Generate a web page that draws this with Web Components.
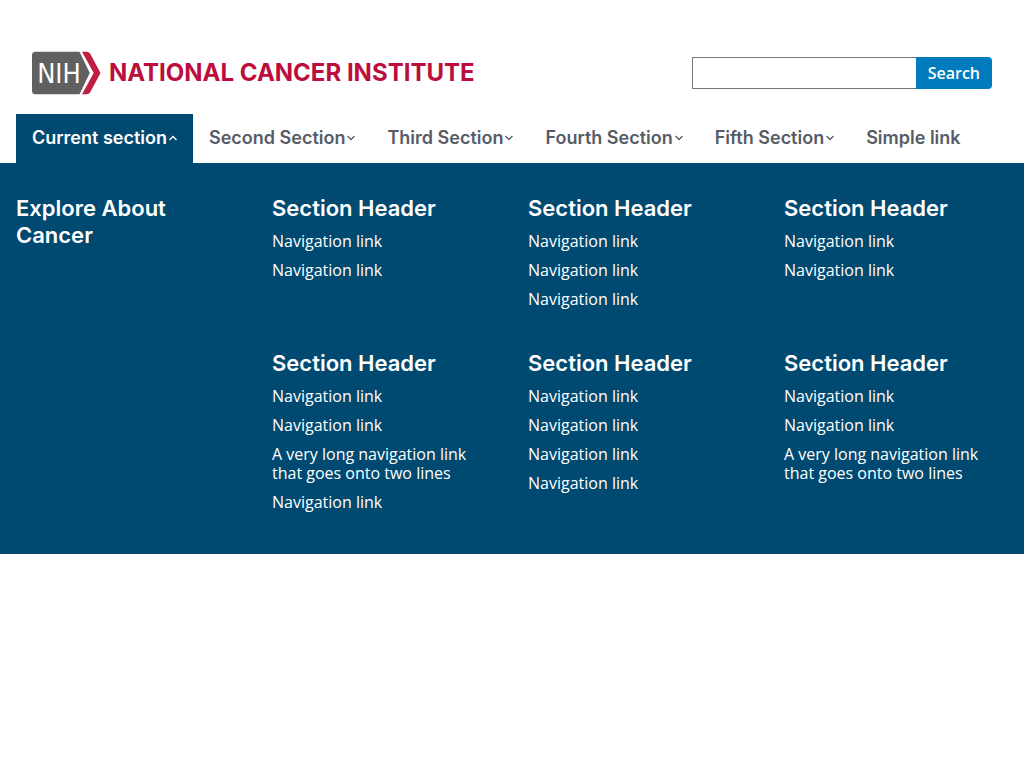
<!DOCTYPE html>
<html lang="en">
<head>
<meta charset="utf-8">
<meta name="viewport" content="width=device-width, initial-scale=1">
<title>National Cancer Institute</title>
<style>
  body { margin: 0; background: #fff; font-family: "Open Sans", sans-serif; font-size: 16px; color: #1b1b1b; }
</style>
</head>
<body>
<nci-header>
  <nci-logo slot="logo"></nci-logo>
  <nci-search slot="search"></nci-search>
</nci-header>
<nci-nav>
  <nci-nav-button open>Current section</nci-nav-button>
  <nci-nav-button>Second Section</nci-nav-button>
  <nci-nav-button>Third Section</nci-nav-button>
  <nci-nav-button>Fourth Section</nci-nav-button>
  <nci-nav-button>Fifth Section</nci-nav-button>
  <nci-nav-link>Simple link</nci-nav-link>
</nci-nav>
<nci-megamenu>
  <nci-heading slot="title" linked>Explore About Cancer</nci-heading>
  <nci-menu-group>
    <nci-heading slot="heading">Section Header</nci-heading>
    <nci-menu-link>Navigation link</nci-menu-link>
    <nci-menu-link>Navigation link</nci-menu-link>
  </nci-menu-group>
  <nci-menu-group>
    <nci-heading slot="heading">Section Header</nci-heading>
    <nci-menu-link>Navigation link</nci-menu-link>
    <nci-menu-link>Navigation link</nci-menu-link>
    <nci-menu-link>Navigation link</nci-menu-link>
  </nci-menu-group>
  <nci-menu-group>
    <nci-heading slot="heading">Section Header</nci-heading>
    <nci-menu-link>Navigation link</nci-menu-link>
    <nci-menu-link>Navigation link</nci-menu-link>
  </nci-menu-group>
  <nci-menu-group>
    <nci-heading slot="heading">Section Header</nci-heading>
    <nci-menu-link>Navigation link</nci-menu-link>
    <nci-menu-link>Navigation link</nci-menu-link>
    <nci-menu-link>A very long navigation link that goes onto two lines</nci-menu-link>
    <nci-menu-link>Navigation link</nci-menu-link>
  </nci-menu-group>
  <nci-menu-group>
    <nci-heading slot="heading">Section Header</nci-heading>
    <nci-menu-link>Navigation link</nci-menu-link>
    <nci-menu-link>Navigation link</nci-menu-link>
    <nci-menu-link>Navigation link</nci-menu-link>
    <nci-menu-link>Navigation link</nci-menu-link>
  </nci-menu-group>
  <nci-menu-group>
    <nci-heading slot="heading">Section Header</nci-heading>
    <nci-menu-link>Navigation link</nci-menu-link>
    <nci-menu-link>Navigation link</nci-menu-link>
    <nci-menu-link>A very long navigation link that goes onto two lines</nci-menu-link>
  </nci-menu-group>
</nci-megamenu>
<script>
const define = (name, html, setup) => customElements.define(name, class extends HTMLElement {
  constructor() {
    super();
    this.attachShadow({ mode: 'open' }).innerHTML = html;
  }
  connectedCallback() { if (setup) setup(this, this.shadowRoot); }
});

define('nci-header', `
  <style>
    :host { display: block; }
    header { display: flex; align-items: center; justify-content: space-between; gap: 32px; padding: 48px 32px 16px; min-height: 50px; }
  </style>
  <header><slot name="logo"></slot><slot name="search"></slot></header>`);

define('nci-logo', `
  <style>
    :host { display: block; }
    a { display: flex; align-items: center; gap: 8px; text-decoration: none; color: #bb0e3d; font: 700 24px/28px Inter, sans-serif; white-space: nowrap; }
    svg { display: block; flex: none; }
  </style>
  <a href="#">
    <svg width="69" height="44" viewBox="0 0 69 44" aria-hidden="true">
      <path fill="#606060" d="M3.5.7H47.5L57.8 22 47.5 43.3H3.5A3.5 3.5 0 0 1 0 39.8V4.2A3.5 3.5 0 0 1 3.5.7Z"/>
      <path fill="#bf1f40" d="M50 .7H54.5Q57 .7 58.2 2.8L68.5 22 58.2 41.2Q57 43.3 54.5 43.3H50L61.7 22Z"/>
      <text x="27" y="32" text-anchor="middle" fill="#fff" font-family="'DejaVu Sans Condensed', Roboto, sans-serif" font-weight="400" font-size="27">NIH</text>
    </svg>
    <span>NATIONAL CANCER INSTITUTE</span>
  </a>`);

define('nci-search', `
  <style>
    :host { display: block; flex: 0 1 300px; }
    form { display: flex; height: 32px; }
    input { flex: 1; min-width: 0; box-sizing: border-box; margin: 0; padding: 0 8px; border: 1px solid #71767a; border-right: 0; border-radius: 0; background: #fff; font: 16px "Open Sans", sans-serif; }
    button { margin: 0; padding: 0 12px; border: 0; border-radius: 0 4px 4px 0; background: #007bbd; color: #fff; font: 600 16px/16px "Open Sans", sans-serif; }
  </style>
  <form role="search">
    <input type="search" aria-label="Search">
    <button type="button">Search</button>
  </form>`);

define('nci-nav', `
  <style>
    :host { display: block; }
    nav { display: flex; padding: 0 16px; }
  </style>
  <nav aria-label="Primary"><slot></slot></nav>`);

const navItem = `
    :host { display: block; color: #565c65; }
    button, a { display: flex; align-items: center; gap: 2px; box-sizing: border-box; height: 49px; margin: 0; padding: 0 16px 2px; border: 0; background: none; color: inherit; text-decoration: none; font: 600 18px/20px Inter, sans-serif; white-space: nowrap; }
    svg { display: block; flex: none; }`;

define('nci-nav-button', `
  <style>${navItem}
    :host([open]) { color: #fff; background: #004971; }
    :host([open]) svg { transform: rotate(180deg); }
  </style>
  <button type="button" aria-expanded="false"><slot></slot>
    <svg width="8" height="6" viewBox="0 0 8 6" aria-hidden="true"><path d="M.5 1 4 4.5 7.5 1" fill="none" stroke="currentColor" stroke-width="1.3"/></svg>
  </button>`,
  (host, root) => root.querySelector('button').setAttribute('aria-expanded', host.hasAttribute('open')));

define('nci-nav-link', `<style>${navItem}</style><a href="#"><slot></slot></a>`);

define('nci-megamenu', `
  <style>
    :host { display: block; background: #004971; color: #fff; }
    section { display: grid; grid-template-columns: repeat(4, 1fr); column-gap: 32px; padding: 32px 16px; }
    .groups { grid-column: span 3; display: grid; grid-template-columns: repeat(3, 1fr); gap: 31px 32px; }
  </style>
  <section>
    <div><slot name="title"></slot></div>
    <div class="groups"><slot></slot></div>
  </section>`);

define('nci-heading', `
  <style>
    :host { display: block; }
    h2 { margin: 0; font: 600 22px/27px Inter, sans-serif; }
    a { color: inherit; text-decoration: none; }
  </style>
  <h2><slot></slot></h2>`,
  (host, root) => {
    if (host.hasAttribute('linked')) root.querySelector('h2').innerHTML = '<a href="#"><slot></slot></a>';
  });

define('nci-menu-group', `
  <style>
    :host { display: block; }
    div { padding-top: 10px; }
  </style>
  <slot name="heading"></slot>
  <div role="list"><slot></slot></div>`);

define('nci-menu-link', `
  <style>
    :host { display: block; padding-bottom: 10px; line-height: 19px; }
    a { display: block; color: #fff; text-decoration: none; }
  </style>
  <a href="#"><slot></slot></a>`,
  host => host.setAttribute('role', 'listitem'));
</script>
</body>
</html>
